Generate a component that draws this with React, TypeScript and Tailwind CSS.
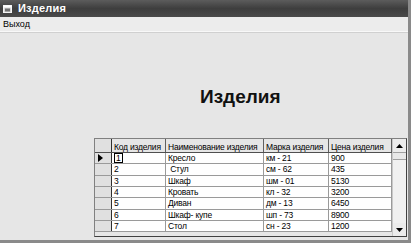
import React from "react";

const rows = [
  ["1", "Кресло", "км - 21", "900"],
  ["2", " Стул", "см - 62", "435"],
  ["3", "Шкаф", "шм - 01", "5130"],
  ["4", "Кровать", "кл - 32", "3200"],
  ["5", "Диван", "дм - 13", "6450"],
  ["6", "Шкаф- купе", "шп - 73", "8900"],
  ["7", "Стол", "сн - 23", "1200"],
];

export default function App() {
  return (
    <div
      className="w-[411px] h-[243px] flex flex-col bg-[#e6e6e6] overflow-hidden border-r-[3px] border-b-[3px] border-r-[#8a8a8a] border-b-[#8a8a8a]"
      style={{ fontFamily: '"Liberation Sans", Arial, sans-serif' }}
    >
      {/* Title bar */}
      <div className="h-[17px] shrink-0 flex items-center gap-[6px] pl-[3px] bg-gradient-to-b from-[#5c5c5c] via-[#3e3e3e] to-[#4a4a4a]">
        <svg width="9" height="8" viewBox="0 0 9 8">
          <rect x="0.5" y="0.5" width="8" height="7" fill="#d8d8d8" stroke="#f4f4f4" />
          <rect x="0.5" y="0.5" width="8" height="2" fill="#ffffff" />
          <rect x="2" y="3.5" width="5" height="3" fill="#707070" />
        </svg>
        <span className="text-white font-bold text-[11px] leading-none tracking-[0.2px]">Изделия</span>
      </div>
      {/* Menu bar */}
      <div className="h-[15px] shrink-0 flex items-center pl-[3px] bg-[#ececec] border-b border-b-[#f8f8f8]">
        <span className="text-[9px] leading-none text-black">Выход</span>
      </div>
      <div className="h-px bg-[#d0d0d0] shrink-0" />
      {/* Main */}
      <div className="flex-1 flex flex-col">
        <div className="mt-[53px] ml-[200px] text-[19px] leading-[21px] font-bold text-[#111]">Изделия</div>
        <div className="mt-[31px] ml-[94px] w-[313px] h-[99px] flex border border-t-[#808080] border-l-[#808080] border-r-[#404040] border-b-[#404040] bg-[#e6e6e6]">
          <div className="flex flex-col w-[297px] text-[8.5px] leading-none text-black tracking-[-0.2px]">
            {/* header */}
            <div className="flex h-[14px] border-b border-b-[#505050]">
              <div className="w-[17px] h-full bg-[#e0e0e0] border-r border-r-[#303030]" />
              <div className="w-[54px] h-full border-r border-r-[#606060] flex items-end pl-[2px] pb-[1px] whitespace-nowrap overflow-hidden">Код изделия</div>
              <div className="w-[98px] h-full border-r border-r-[#606060] flex items-end pl-[2px] pb-[1px] whitespace-nowrap overflow-hidden">Наименование изделия</div>
              <div className="w-[65px] h-full border-r border-r-[#606060] flex items-end pl-[2px] pb-[1px] whitespace-nowrap overflow-hidden">Марка изделия</div>
              <div className="w-[63px] h-full border-r border-r-[#606060] flex items-end pl-[2px] pb-[1px] whitespace-nowrap overflow-hidden">Цена изделия</div>
            </div>
            {rows.map((r, i) => (
              <div key={i} className="flex h-[11.33px] border-b border-b-[#9a9a9a]">
                <div className="w-[17px] h-full bg-[#e0e0e0] border-r border-r-[#303030] flex items-center pl-[3px]">
                  {i === 0 && (
                    <svg width="5" height="8" viewBox="0 0 5 8">
                      <path d="M0 0 L5 4 L0 8 Z" fill="#000" />
                    </svg>
                  )}
                </div>
                <div className="w-[54px] h-full bg-white border-r border-r-[#9a9a9a] flex items-center pl-[2px]">
                  {i === 0 ? (
                    <span className="border border-[#000] px-[1px] leading-[8px]">{r[0]}</span>
                  ) : (
                    r[0]
                  )}
                </div>
                <div className="w-[98px] h-full bg-white border-r border-r-[#9a9a9a] flex items-center pl-[2px] whitespace-pre overflow-hidden">{r[1]}</div>
                <div className="w-[65px] h-full bg-white border-r border-r-[#9a9a9a] flex items-center pl-[2px] whitespace-pre overflow-hidden">{r[2]}</div>
                <div className="w-[63px] h-full bg-white border-r border-r-[#9a9a9a] flex items-center pl-[2px]">{r[3]}</div>
              </div>
            ))}
          </div>
          <div className="flex-1" />
          {/* scrollbar */}
          <div className="w-[14px] h-full flex flex-col bg-[#f0f0f0] border-l border-l-[#c8c8c8]">
            <div className="h-[13px] flex items-center justify-center bg-[#ececec]">
              <svg width="7" height="4" viewBox="0 0 7 4">
                <path d="M3.5 0 L7 4 L0 4 Z" fill="#000" />
              </svg>
            </div>
            <div className="h-[8px] bg-[#e8e8e8] border-t border-b border-[#a0a0a0]" />
            <div className="flex-1" />
            <div className="h-[13px] flex items-center justify-center bg-[#ececec]">
              <svg width="7" height="4" viewBox="0 0 7 4">
                <path d="M0 0 L7 0 L3.5 4 Z" fill="#000" />
              </svg>
            </div>
          </div>
        </div>
      </div>
    </div>
  );
}
